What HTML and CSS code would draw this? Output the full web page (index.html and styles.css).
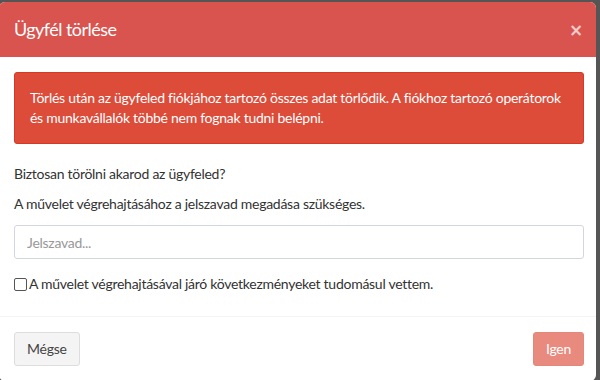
FILE: index.html
```html
<!DOCTYPE html>
<html lang="hu">
<head>
<meta charset="utf-8">
<title>Ügyfél törlése</title>
<link rel="stylesheet" href="styles.css">
</head>
<body>
<div class="modal">
  <div class="modal-header">
    <h4 class="modal-title">Ügyfél törlése</h4>
    <span class="close">&times;</span>
  </div>
  <div class="modal-body">
    <div class="alert">Törlés után az ügyfeled fiókjához tartozó összes adat törlődik. A fiókhoz tartozó operátorok és munkavállalók többé nem fognak tudni belépni.</div>
    <p class="text">Biztosan törölni akarod az ügyfeled?</p>
    <p class="text">A művelet végrehajtásához a jelszavad megadása szükséges.</p>
    <input class="input" type="password" placeholder="Jelszavad...">
    <label class="check"><span class="box"></span>A művelet végrehajtásával járó következményeket tudomásul vettem.</label>
  </div>
  <div class="modal-footer">
    <button class="btn btn-default">Mégse</button>
    <button class="btn btn-danger">Igen</button>
  </div>
</div>
</body>
</html>
```
FILE: styles.css
```css
html, body {
  margin: 0;
  padding: 0;
  background: #555;
  height: 100%;
  overflow: hidden;
}
body {
  font-family: "Lato", "Noto Sans", sans-serif;
  font-size: 14px;
  letter-spacing: -0.27px;
  color: #333;
  line-height: 20px;
}
.modal {
  margin: 2px 0 0 -1px;
  width: 597px;
  background: #fff;
  border-radius: 6px;
  overflow: hidden;
}
.modal-header {
  background: #d9534f;
  padding: 15px 12px 15px 15px;
  display: flex;
  justify-content: space-between;
  align-items: center;
}
.modal-title {
  margin: 0;
  font-size: 18px;
  line-height: 25px;
  letter-spacing: -0.55px;
  font-weight: normal;
  color: #fff;
}
.close {
  font-family: "DejaVu Sans", sans-serif;
  font-size: 17px;
  font-weight: bold;
  color: #fff;
  opacity: 0.7;
  line-height: 20px;
  margin-right: 1px;
}
.modal-body {
  padding: 15px 12px 22px 15px;
  display: flex;
  flex-direction: column;
}
.alert {
  background: #dd4b39;
  border: 1px solid #d73925;
  border-radius: 3px;
  padding: 15px;
  color: #fff;
  margin-bottom: 20px;
}
.text {
  margin: 0 0 10px;
}
.input {
  height: 34px;
  box-sizing: border-box;
  border: 1px solid #d2d6de;
  border-radius: 3px;
  padding: 6px 12px;
  font: inherit;
  letter-spacing: inherit;
  margin: 1px 0 15px;
}
.input::placeholder {
  color: #999;
}
.check {
  display: flex;
  align-items: center;
}
.box {
  width: 11px;
  height: 11px;
  border: 1px solid #555;
  border-radius: 2px;
  margin-right: 2px;
  background: #fff;
}
.modal-footer {
  border-top: 1px solid #f4f4f4;
  padding: 15px 12px 15px 15px;
  display: flex;
  justify-content: space-between;
}
.btn {
  font: inherit;
  letter-spacing: inherit;
  height: 34px;
  padding: 6px 12px;
  border-radius: 3px;
  border: 1px solid #ddd;
}
.btn-default {
  background: #f4f4f4;
  color: #444;
}
.btn-danger {
  background: #e98a7e;
  border-color: #e5867a;
  color: #fff;
}
```
